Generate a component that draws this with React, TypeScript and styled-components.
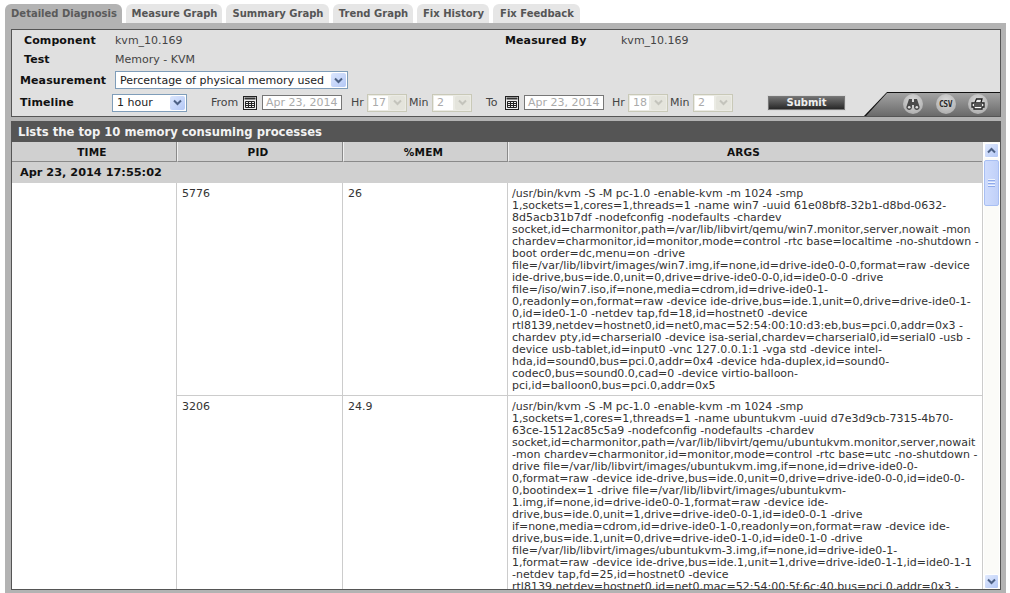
import React from "react";
import { createGlobalStyle, styled } from "styled-components";

const GlobalStyle = createGlobalStyle`
  html, body {
    margin: 0;
    height: 593px;
    overflow: hidden;
    background: #fff;
    font-family: "DejaVu Sans", Verdana, sans-serif;
    font-size: 11px;
    color: #333;
  }
`;

const Page = styled.div`
  width: 1010px;
  height: 593px;
  padding: 4px 4px 0 5px;
  box-sizing: border-box;
  overflow: hidden;
`;

const TabBar = styled.div`
  display: flex;
  gap: 4px;
  height: 19px;
`;

const Tab = styled.div<{ $active?: boolean; $w: number }>`
  width: ${(p) => p.$w}px;
  height: 19px;
  line-height: 19px;
  text-align: center;
  font-weight: bold;
  font-size: 10px;
  padding-left: 1px;
  box-sizing: border-box;
  color: ${(p) => (p.$active ? "#5a5a5a" : "#555")};
  background: ${(p) => (p.$active ? "#b3b3b3" : "#e6e6e6")};
  border-radius: 6px 6px 0 0;
  white-space: nowrap;
`;

const Panel = styled.div`
  background: #b3b3b3;
  height: 570px;
  padding: 6px 5px 0 6px;
  box-sizing: border-box;
`;

const Form = styled.div`
  height: 88px;
  box-sizing: border-box;
  background: #e0e0e0;
  border: 1px solid #555;
  margin-bottom: 4px;
  padding-top: 1px;
  overflow: hidden;
`;

const InfoRow = styled.div<{ $h: number }>`
  display: flex;
  align-items: center;
  height: ${(p) => p.$h}px;
`;

const Label = styled.div<{ $w: number; $inset: number; $lift?: number }>`
  width: ${(p) => p.$w}px;
  padding-left: ${(p) => p.$inset}px;
  margin-bottom: ${(p) => p.$lift ?? 0}px;
  box-sizing: border-box;
  font-weight: bold;
  font-size: 11px;
  letter-spacing: 0.1px;
  color: #111;
  white-space: nowrap;
`;

const Value = styled.div<{ $w?: number }>`
  width: ${(p) => (p.$w ? `${p.$w}px` : "auto")};
  font-size: 11px;
  color: #444;
  white-space: nowrap;
`;

const Dropdown = styled.div<{ $w: number }>`
  width: ${(p) => p.$w}px;
  height: 18px;
  box-sizing: border-box;
  display: flex;
  align-items: center;
  justify-content: space-between;
  background: #fff;
  border: 1px solid #7f9db9;
  padding: 0 1px 0 4px;
  font-size: 11px;
  color: #222;
  white-space: nowrap;
`;

const DropArrow = styled.span`
  width: 15px;
  height: 14px;
  display: flex;
  align-items: center;
  justify-content: center;
  border-radius: 2px;
  background: linear-gradient(135deg, #dbe6fd, #b4c8f6);
  color: #4d6185;
`;

const TimelineRow = styled.div`
  display: flex;
  align-items: flex-end;
  height: 25px;
`;

const TimelineFields = styled.div`
  display: flex;
  align-items: center;
  height: 21px;
  padding-bottom: 3px;
`;

const Muted = styled.span<{ $w: number; $pad?: number }>`
  width: ${(p) => p.$w}px;
  padding-left: ${(p) => p.$pad ?? 0}px;
  box-sizing: border-box;
  font-size: 11px;
  color: #444;
  white-space: nowrap;
`;

const CalendarButton = styled.span`
  width: 14px;
  height: 14px;
  margin-right: 5px;
  color: #222;
  display: block;
`;

const DateField = styled.div`
  width: 80px;
  height: 15px;
  line-height: 13px;
  box-sizing: border-box;
  border: 1px solid #777;
  background: #fff;
  padding-left: 3px;
  font-size: 11px;
  color: #aaa;
  white-space: nowrap;
  overflow: hidden;
`;

const NumberSelect = styled.div`
  width: 40px;
  height: 18px;
  box-sizing: border-box;
  border: 1px solid #c9c9b8;
  background: #ebebe4;
  display: flex;
  align-items: center;
  justify-content: space-between;
  padding: 0 1px 0 1px;
  font-size: 11px;
  color: #aaa;
`;

const NumberText = styled.span`
  width: 19px;
  height: 14px;
  line-height: 14px;
  padding-left: 3px;
  box-sizing: border-box;
  background: #fff;
`;

const DisabledArrow = styled.span`
  width: 15px;
  height: 14px;
  display: flex;
  align-items: center;
  justify-content: center;
  color: #c4c4bc;
  background: #e4e4dc;
  border-radius: 2px;
`;

const SubmitButton = styled.div`
  width: 79px;
  height: 16px;
  line-height: 14px;
  box-sizing: border-box;
  margin-left: 34px;
  border: 1px solid #d8d8d8;
  outline: 1px solid #777;
  outline-offset: -2px;
  background: linear-gradient(#777, #222);
  color: #eee;
  font-weight: bold;
  font-size: 10px;
  text-align: center;
`;

const ToolPanel = styled.div`
  position: relative;
  width: 137px;
  height: 24px;
  margin-left: 18px;
  flex: none;
  background: #111;
  clip-path: polygon(23px 0, 100% 0, 100% 100%, 0 100%);
`;

const ToolFill = styled.div`
  position: absolute;
  inset: 1px 0 0 0;
  background: linear-gradient(#a3a3a3, #6a6a6a);
  clip-path: polygon(23px 0, 100% 0, 100% 100%, 2px 100%);
  display: flex;
  align-items: center;
  padding: 0 13px 1px 39px;
  justify-content: space-between;
`;

const ToolButton = styled.span`
  width: 20px;
  height: 20px;
  border-radius: 50%;
  background: radial-gradient(circle at 50% 35%, #dcdcdc, #a4a4a4);
  display: flex;
  align-items: center;
  justify-content: center;
  color: #333;
`;

const CsvText = styled.span`
  font-family: "DejaVu Sans Mono", monospace;
  font-size: 8px;
  font-weight: bold;
  letter-spacing: -0.4px;
  color: #2a2a2a;
`;

const Results = styled.div`
  height: 469px;
  box-sizing: border-box;
  border: 1px solid #555;
  background: #fff;
  overflow: hidden;
`;

const ResultsTitle = styled.div`
  height: 20px;
  line-height: 21px;
  background: #555;
  color: #f2f2f2;
  font-weight: bold;
  font-size: 11.6px;
  padding-left: 6px;
`;

const ResultsBody = styled.div`
  display: flex;
  height: 447px;
`;

const TableArea = styled.div`
  width: 971px;
  height: 447px;
  overflow: hidden;
  box-sizing: border-box;
  border-right: 1px solid #ccc;
  flex: none;
`;

const Grid = styled.div`
  display: grid;
  grid-template-columns: 165px 166px 165px 474px;
`;

const HeadCell = styled.div`
  height: 20px;
  line-height: 21px;
  box-sizing: border-box;
  background: #d0d0d0;
  border-bottom: 1px solid #8a8a8a;
  border-right: 1px solid #8a8a8a;
  border-left: 1px solid #f0f0f0;
  padding-right: 4px;
  text-align: center;
  font-weight: bold;
  font-size: 10.5px;
  letter-spacing: 0.2px;
  color: #111;
  &:first-child {
    border-left: 0;
  }
  &:nth-child(4) {
    border-right: 0;
  }
`;

const GroupRow = styled.div`
  grid-column: 1 / -1;
  height: 21px;
  line-height: 21px;
  background: #d0d0d0;
  padding-left: 8px;
  font-weight: bold;
  font-size: 11.3px;
  color: #111;
`;

const TimeCell = styled.div<{ $span: number }>`
  grid-row: span ${(p) => p.$span};
  border-right: 1px solid #ccc;
`;

const DataCell = styled.div<{ $pre?: boolean }>`
  padding: 5px 4px 3px 5px;
  line-height: 12px;
  font-size: 11px;
  color: #333;
  border-right: 1px solid #ccc;
  border-bottom: 1px solid #ccc;
  white-space: ${(p) => (p.$pre ? "pre" : "normal")};
`;

const ArgsCell = styled(DataCell)`
  padding-left: 4px;
  border-right: 0;
`;

const Scrollbar = styled.div`
  width: 15px;
  height: 447px;
  margin-left: 1px;
  display: flex;
  flex-direction: column;
  background: #fbfbf8;
  padding-top: 1px;
  box-sizing: border-box;
`;

const ScrollButton = styled.div`
  width: 15px;
  height: 15px;
  flex: none;
  box-sizing: border-box;
  border: 1px solid #fff;
  border-radius: 2px;
  background: linear-gradient(135deg, #e1eafe, #b4c8f6);
  color: #4d6185;
  display: flex;
  align-items: center;
  justify-content: center;
`;

const ScrollThumb = styled.div`
  width: 15px;
  height: 46px;
  margin-top: 2px;
  box-sizing: border-box;
  border: 1px solid #a8bff3;
  border-radius: 2px;
  background: linear-gradient(90deg, #cfdcfd, #c0d0f8);
  display: flex;
  flex-direction: column;
  align-items: center;
  justify-content: center;
  gap: 1px;
`;

const ThumbGrip = styled.span`
  width: 7px;
  height: 1px;
  background: #eef4fe;
  border-bottom: 1px solid #8faaeb;
`;

const ScrollSpacer = styled.div`
  flex: 1;
`;

const Chevron = ({ up }: { up?: boolean }) => (
  <svg width="9" height="7" viewBox="0 0 9 7" fill="none">
    <path
      d={up ? "M1 5.5 L4.5 2 L8 5.5" : "M1 1.5 L4.5 5 L8 1.5"}
      stroke="currentColor"
      strokeWidth="2"
    />
  </svg>
);

const CalendarIcon = () => (
  <CalendarButton>
    <svg width="14" height="14" viewBox="0 0 14 14" fill="none" stroke="currentColor">
      <rect x="0.5" y="0.5" width="13" height="13" fill="#eee" />
      <rect x="1.5" y="1.5" width="11" height="2" fill="#333" stroke="none" />
      <path d="M2.5 5.5h9v6h-9zM2.5 7.5h9M2.5 9.5h9M5.5 5.5v6M8.5 5.5v6" strokeWidth="1" />
    </svg>
  </CalendarButton>
);

const Binoculars = () => (
  <svg width="14" height="12" viewBox="0 0 14 12" fill="#4a4a4a">
    <path d="M3 1h3v3h2V1h3l2.5 7.5A2.8 2.8 0 1 1 8 9.5V7H6v2.5A2.8 2.8 0 1 1 .5 8.5z" />
    <circle cx="3.2" cy="9.2" r="1.3" fill="#ddd" />
    <circle cx="10.8" cy="9.2" r="1.3" fill="#ddd" />
  </svg>
);

const Printer = () => (
  <svg width="14" height="12" viewBox="0 0 14 12" fill="none" stroke="#222" strokeWidth="1.3">
    <path d="M4 4.5 L5.5 1 H11 L10 4.5" fill="#eee" />
    <path d="M1 5 H13 V9 H1 Z" fill="#eee" />
    <path d="M3 9 V11 H11 V9" fill="#fff" />
    <path d="M3 7 H11" />
  </svg>
);

const TimeSelect = ({ hour, min }: { hour: string; min: string }) => (
  <>
    <NumberSelect>
      <NumberText>{hour}</NumberText>
      <DisabledArrow>
        <Chevron />
      </DisabledArrow>
    </NumberSelect>
    <Muted $w={25} $pad={2}>Min</Muted>
    <NumberSelect>
      <NumberText>{min}</NumberText>
      <DisabledArrow>
        <Chevron />
      </DisabledArrow>
    </NumberSelect>
  </>
);

const tabs = [
  { name: "Detailed Diagnosis", w: 117, active: true },
  { name: "Measure Graph", w: 96 },
  { name: "Summary Graph", w: 103 },
  { name: "Trend Graph", w: 80 },
  { name: "Fix History", w: 72 },
  { name: "Fix Feedback", w: 87 },
];

const win7Args = `/usr/bin/kvm -S -M pc-1.0 -enable-kvm -m 1024 -smp
1,sockets=1,cores=1,threads=1 -name win7 -uuid 61e08bf8-32b1-d8bd-0632-
8d5acb31b7df -nodefconfig -nodefaults -chardev
socket,id=charmonitor,path=/var/lib/libvirt/qemu/win7.monitor,server,nowait -mon
chardev=charmonitor,id=monitor,mode=control -rtc base=localtime -no-shutdown -
boot order=dc,menu=on -drive
file=/var/lib/libvirt/images/win7.img,if=none,id=drive-ide0-0-0,format=raw -device
ide-drive,bus=ide.0,unit=0,drive=drive-ide0-0-0,id=ide0-0-0 -drive
file=/iso/win7.iso,if=none,media=cdrom,id=drive-ide0-1-
0,readonly=on,format=raw -device ide-drive,bus=ide.1,unit=0,drive=drive-ide0-1-
0,id=ide0-1-0 -netdev tap,fd=18,id=hostnet0 -device
rtl8139,netdev=hostnet0,id=net0,mac=52:54:00:10:d3:eb,bus=pci.0,addr=0x3 -
chardev pty,id=charserial0 -device isa-serial,chardev=charserial0,id=serial0 -usb -
device usb-tablet,id=input0 -vnc 127.0.0.1:1 -vga std -device intel-
hda,id=sound0,bus=pci.0,addr=0x4 -device hda-duplex,id=sound0-
codec0,bus=sound0.0,cad=0 -device virtio-balloon-
pci,id=balloon0,bus=pci.0,addr=0x5`;

const ubuntuArgs = `/usr/bin/kvm -S -M pc-1.0 -enable-kvm -m 1024 -smp
1,sockets=1,cores=1,threads=1 -name ubuntukvm -uuid d7e3d9cb-7315-4b70-
63ce-1512ac85c5a9 -nodefconfig -nodefaults -chardev
socket,id=charmonitor,path=/var/lib/libvirt/qemu/ubuntukvm.monitor,server,nowait
-mon chardev=charmonitor,id=monitor,mode=control -rtc base=utc -no-shutdown -
drive file=/var/lib/libvirt/images/ubuntukvm.img,if=none,id=drive-ide0-0-
0,format=raw -device ide-drive,bus=ide.0,unit=0,drive=drive-ide0-0-0,id=ide0-0-
0,bootindex=1 -drive file=/var/lib/libvirt/images/ubuntukvm-
1.img,if=none,id=drive-ide0-0-1,format=raw -device ide-
drive,bus=ide.0,unit=1,drive=drive-ide0-0-1,id=ide0-0-1 -drive
if=none,media=cdrom,id=drive-ide0-1-0,readonly=on,format=raw -device ide-
drive,bus=ide.1,unit=0,drive=drive-ide0-1-0,id=ide0-1-0 -drive
file=/var/lib/libvirt/images/ubuntukvm-3.img,if=none,id=drive-ide0-1-
1,format=raw -device ide-drive,bus=ide.1,unit=1,drive=drive-ide0-1-1,id=ide0-1-1
-netdev tap,fd=25,id=hostnet0 -device
rtl8139,netdev=hostnet0,id=net0,mac=52:54:00:5f:6c:40,bus=pci.0,addr=0x3 -`;

const rows = [
  { pid: "5776", mem: "26", args: win7Args },
  { pid: "3206", mem: "24.9", args: ubuntuArgs },
];

export default function App() {
  return (
    <Page>
      <GlobalStyle />
      <TabBar>
        {tabs.map((t) => (
          <Tab key={t.name} $w={t.w} $active={t.active}>
            {t.name}
          </Tab>
        ))}
      </TabBar>
      <Panel>
        <Form>
          <InfoRow $h={19}>
            <Label $w={103} $inset={12}>Component</Label>
            <Value $w={390}>kvm_10.169</Value>
            <Label $w={116} $inset={0}>Measured By</Label>
            <Value>kvm_10.169</Value>
          </InfoRow>
          <InfoRow $h={19}>
            <Label $w={103} $inset={12}>Test</Label>
            <Value>Memory - KVM</Value>
          </InfoRow>
          <InfoRow $h={22}>
            <Label $w={103} $inset={8}>Measurement</Label>
            <Dropdown $w={233}>
              Percentage of physical memory used
              <DropArrow>
                <Chevron />
              </DropArrow>
            </Dropdown>
          </InfoRow>
          <TimelineRow>
            <TimelineFields>
              <Label $w={100} $inset={8}>Timeline</Label>
              <Dropdown $w={75}>
                1 hour
                <DropArrow>
                  <Chevron />
                </DropArrow>
              </Dropdown>
              <Muted $w={56} $pad={24}>From</Muted>
              <CalendarIcon />
              <DateField>Apr 23, 2014</DateField>
              <Muted $w={25} $pad={9}>Hr</Muted>
              <TimeSelect hour="17" min="2" />
              <Muted $w={33} $pad={14}>To</Muted>
              <CalendarIcon />
              <DateField>Apr 23, 2014</DateField>
              <Muted $w={24} $pad={8}>Hr</Muted>
              <TimeSelect hour="18" min="2" />
              <SubmitButton>Submit</SubmitButton>
            </TimelineFields>
            <ToolPanel>
              <ToolFill>
                <ToolButton>
                  <Binoculars />
                </ToolButton>
                <ToolButton>
                  <CsvText>CSV</CsvText>
                </ToolButton>
                <ToolButton>
                  <Printer />
                </ToolButton>
              </ToolFill>
            </ToolPanel>
          </TimelineRow>
        </Form>
        <Results>
          <ResultsTitle>Lists the top 10 memory consuming processes</ResultsTitle>
          <ResultsBody>
            <TableArea>
              <Grid>
                <HeadCell>TIME</HeadCell>
                <HeadCell>PID</HeadCell>
                <HeadCell>%MEM</HeadCell>
                <HeadCell>ARGS</HeadCell>
                <GroupRow>Apr 23, 2014 17:55:02</GroupRow>
                <TimeCell $span={rows.length} />
                {rows.map((r) => (
                  <React.Fragment key={r.pid}>
                    <DataCell>{r.pid}</DataCell>
                    <DataCell>{r.mem}</DataCell>
                    <ArgsCell $pre>{r.args}</ArgsCell>
                  </React.Fragment>
                ))}
              </Grid>
            </TableArea>
            <Scrollbar>
              <ScrollButton>
                <Chevron up />
              </ScrollButton>
              <ScrollThumb>
                <ThumbGrip />
                <ThumbGrip />
                <ThumbGrip />
              </ScrollThumb>
              <ScrollSpacer />
              <ScrollButton>
                <Chevron />
              </ScrollButton>
            </Scrollbar>
          </ResultsBody>
        </Results>
      </Panel>
    </Page>
  );
}
